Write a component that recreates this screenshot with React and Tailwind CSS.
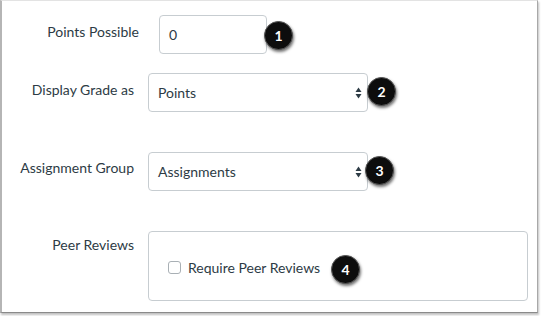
import React from "react";

const font = { fontFamily: "Lato, 'Open Sans', sans-serif" };

function Badge({ n }) {
  return (
    <div className="w-[29px] h-[29px] rounded-full bg-[#0d0d0d] text-white flex items-center justify-center text-[14px] font-bold shadow-[1px_2px_3px_rgba(0,0,0,0.55)] border border-[#555]">
      {n}
    </div>
  );
}

function Arrows() {
  return (
    <svg width="7" height="12" viewBox="0 0 7 12" className="shrink-0">
      <path d="M3.5 0.5 L6.5 5 L0.5 5 Z" fill="#2d3b45" />
      <path d="M3.5 11.5 L6.5 7 L0.5 7 Z" fill="#2d3b45" />
    </svg>
  );
}

function Select({ value }) {
  return (
    <div className="w-[220px] h-[39px] border border-[#c7cdd1] rounded-[4px] bg-white flex items-center justify-between pl-[9px] pr-[5px] text-[14px] text-[#2d3b45]">
      <span>{value}</span>
      <Arrows />
    </div>
  );
}

export default function App() {
  return (
    <div className="w-[541px] h-[316px] bg-white" style={font}>
      <div className="w-[538px] h-[313px] border-l-2 border-r border-b border-t border-l-[#b5b5b5] border-r-[#a8a8a8] border-b-[#8a8a8a] border-t-[#e3e3e3] shadow-[1px_2px_2px_rgba(0,0,0,0.25)] bg-white">
        <div className="flex flex-col text-[#2d3b45] text-[14px]">
          <div className="flex items-start pt-[14px]">
            <div className="w-[137px] text-right pt-[6px]">Points Possible</div>
            <div className="ml-[20px] w-[108px] h-[39px] border border-[#c7cdd1] rounded-[4px] flex items-center pl-[9px]">0</div>
            <div className="ml-[-3px] mt-[6px]"><Badge n="1" /></div>
          </div>
          <div className="flex items-start pt-[19px]">
            <div className="w-[132px] text-right pt-[6px]">Display Grade as</div>
            <div className="ml-[14px]"><Select value="Points" /></div>
            <div className="ml-[-1px] mt-[4px]"><Badge n="2" /></div>
          </div>
          <div className="flex items-start pt-[40px]">
            <div className="w-[132px] text-right pt-[5px]">Assignment Group</div>
            <div className="ml-[14px]"><Select value="Assignments" /></div>
            <div className="ml-[-3px] mt-[4px]"><Badge n="3" /></div>
          </div>
          <div className="flex items-start pt-[40px]">
            <div className="w-[132px] text-right pt-[3px]">Peer Reviews</div>
            <div className="ml-[14px] w-[380px] h-[70px] border border-[#c7cdd1] rounded-[4px] flex items-center pl-[19px] pt-[3px]">
              <div className="w-[13px] h-[13px] border border-[#a9b0b5] rounded-[3px] bg-white" />
              <span className="ml-[7px]">Require Peer Reviews</span>
              <div className="ml-[11px] mt-[4px]"><Badge n="4" /></div>
            </div>
          </div>
        </div>
      </div>
    </div>
  );
}
